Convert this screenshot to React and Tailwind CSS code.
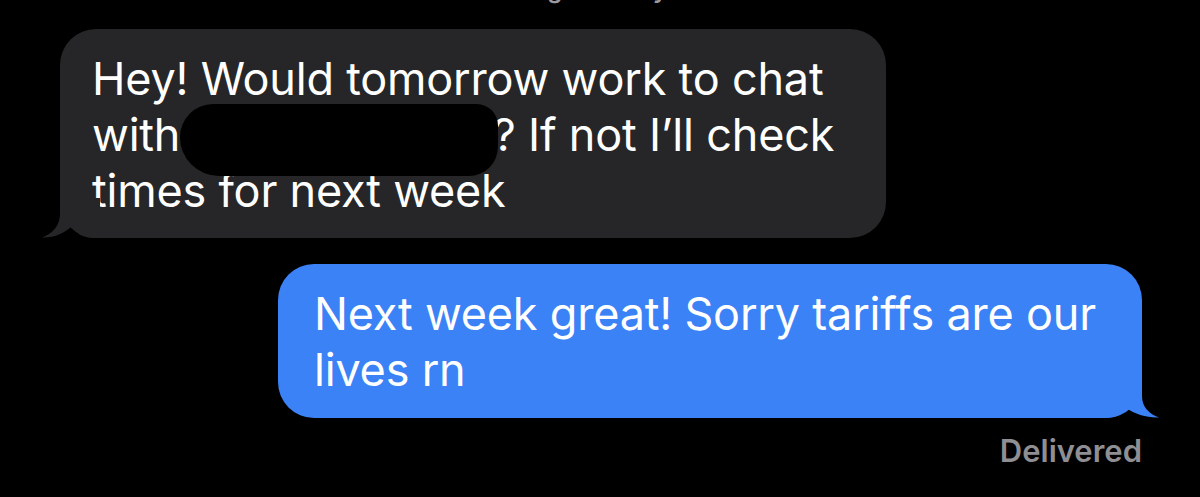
const GrayTail = () => (
  <svg
    className="absolute left-[-20px] bottom-0"
    width="60"
    height="40"
    viewBox="0 0 60 40"
  >
    <path
      d="M20 0 L20 16 C20 28 12 36 2 39.5 C14 40 25 35 32 28 C36 35 42 40 54 40 L60 40 L60 0 Z"
      fill="#262628"
    />
  </svg>
);

const BlueTail = () => (
  <svg
    className="absolute right-[-17px] bottom-0"
    width="60"
    height="40"
    viewBox="0 0 60 40"
  >
    <path
      d="M43 0 L43 18 C43 29 50 36 60 39.5 C48 40 36 36 27 30 C23 36 18 40 6 40 L0 40 L0 0 Z"
      fill="#3b82f6"
    />
  </svg>
);

export default function App() {
  return (
    <div className="relative h-[497px] w-[1200px] overflow-hidden bg-black font-['Inter','Liberation_Sans',sans-serif] text-white">
      {/* timestamp cut off at the top */}
      <div className="flex h-[8px] justify-center overflow-hidden">
        <div className="mt-[-25px] whitespace-nowrap pl-[30px] text-[24px] font-semibold leading-[30px] text-[#9a9aa0]">
          iMessage · Today 2:14 PM
        </div>
      </div>

      {/* incoming */}
      <div className="relative ml-[60px] mt-[21px] h-[209px] w-[826px]">
        <div className="h-full rounded-[36px] bg-[#262628] pl-[32px] pt-[22px] text-[45px] leading-[56px] tracking-[-0.2px]">
          Hey! Would tomorrow work to chat
          <br />
          with{" "}
          <span className="relative inline-block h-[1px] w-[300px]">
            <span className="absolute bottom-[-25px] left-[-13px] h-[72px] w-[318px] rounded-[34px_22px_30px_40px] bg-black" />
          </span>
          ? If not I’ll check
          <br />
          times for next week
        </div>
        <GrayTail />
      </div>

      {/* outgoing */}
      <div className="relative ml-[278px] mt-[26px] h-[154px] w-[864px]">
        <div className="h-full rounded-[36px] bg-[#3b82f6] pl-[36px] pt-[22px] text-[45px] leading-[56px] tracking-[-0.2px]">
          Next week great! Sorry tariffs are our
          <br />
          lives rn
        </div>
        <BlueTail />
      </div>

      <div className="mt-[15px] w-[1142px] text-right text-[31px] font-semibold leading-[36px] text-[#8e8e93]">
        Delivered
      </div>
    </div>
  );
}
